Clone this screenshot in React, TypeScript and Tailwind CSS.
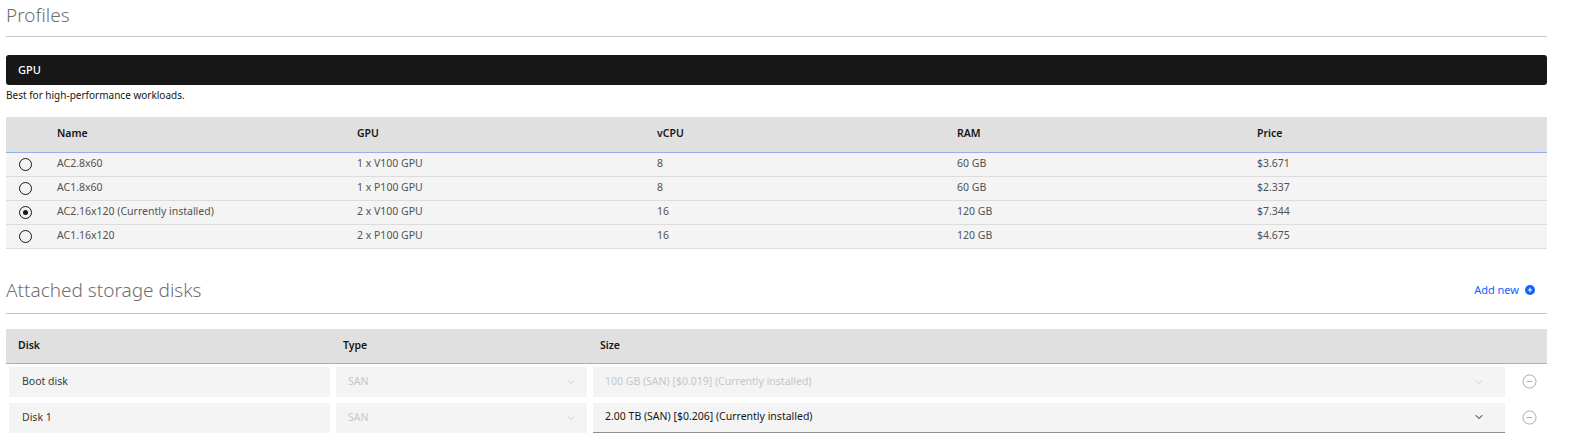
import { ChevronDown } from 'lucide-react';

interface Profile {
  name: string;
  gpu: string;
  vcpu: string;
  ram: string;
  price: string;
  selected?: boolean;
}

const profiles: Profile[] = [
  { name: 'AC2.8x60', gpu: '1 x V100 GPU', vcpu: '8', ram: '60 GB', price: '$3.671' },
  { name: 'AC1.8x60', gpu: '1 x P100 GPU', vcpu: '8', ram: '60 GB', price: '$2.337' },
  { name: 'AC2.16x120 (Currently installed)', gpu: '2 x V100 GPU', vcpu: '16', ram: '120 GB', price: '$7.344', selected: true },
  { name: 'AC1.16x120', gpu: '2 x P100 GPU', vcpu: '16', ram: '120 GB', price: '$4.675' },
];

function Radio({ checked }: { checked?: boolean }) {
  return (
    <span className="flex h-[13px] w-[13px] items-center justify-center rounded-full border-[1.5px] border-[#161616]">
      {checked && <span className="h-[5px] w-[5px] rounded-full bg-[#161616]" />}
    </span>
  );
}

function MinusCircle() {
  return (
    <svg width="15" height="15" viewBox="0 0 16 16" fill="none" stroke="#a8a8a8" strokeWidth="1">
      <circle cx="8" cy="8" r="7" />
      <line x1="5" y1="8" x2="11" y2="8" />
    </svg>
  );
}

export default function App() {
  return (
    <div className="w-[1580px] h-[445px] bg-white px-[6px] text-[#161616]" style={{ fontFamily: '"Noto Sans", "Open Sans", sans-serif' }}>
      <div className="w-[1541px]">
        {/* Profiles */}
        <h2 className="pt-[3px] h-[36px] text-[19px] font-light text-[#6f6f6f] leading-[24px]">Profiles</h2>
        <div className="border-t border-[#c6c6c6]" />

        <div className="mt-[18px] h-[30px] rounded-[3px] bg-[#171717] pl-[12px] flex items-center text-[11px] font-medium text-white">
          GPU
        </div>
        <p className="mt-[3px] text-[10px] text-[#161616] leading-[14px]">Best for high-performance workloads.</p>

        <table className="mt-[15px] w-full border-collapse text-[10.5px] table-fixed">
          <thead>
            <tr className="h-[35px] bg-[#e0e0e0] border-b border-[#8fb3e8] text-left">
              <th className="w-[35px]" />
              <th className="w-[300px] pl-[16px] font-semibold">Name</th>
              <th className="w-[300px] pl-[16px] font-semibold">GPU</th>
              <th className="w-[300px] pl-[16px] font-semibold">vCPU</th>
              <th className="w-[300px] pl-[16px] font-semibold">RAM</th>
              <th className="pl-[16px] font-semibold">Price</th>
            </tr>
          </thead>
          <tbody>
            {profiles.map((p) => (
              <tr key={p.name} className="h-[24px] bg-[#f4f4f4] border-b border-[#dcdcdc] text-[#525252]">
                <td className="pl-[13px]">
                  <Radio checked={p.selected} />
                </td>
                <td className="pl-[16px]">{p.name}</td>
                <td className="pl-[16px]">{p.gpu}</td>
                <td className="pl-[16px]">{p.vcpu}</td>
                <td className="pl-[16px]">{p.ram}</td>
                <td className="pl-[16px]">{p.price}</td>
              </tr>
            ))}
          </tbody>
        </table>

        {/* Attached storage disks */}
        <div className="mt-[28px] h-[36px] flex items-start justify-between">
          <h2 className="pt-[1px] text-[19px] font-light text-[#6f6f6f] leading-[24px]">Attached storage disks</h2>
          <button className="mt-[5px] mr-[12px] flex items-center gap-[6px] text-[11px] text-[#0f62fe]">
            Add new
            <svg width="10" height="10" viewBox="0 0 16 16">
              <circle cx="8" cy="8" r="8" fill="#0f62fe" />
              <path d="M8 4.5v7M4.5 8h7" stroke="white" strokeWidth="1.8" />
            </svg>
          </button>
        </div>
        <div className="border-t border-[#c6c6c6]" />

        <div className="mt-[15px] h-[35px] bg-[#e0e0e0] border-b border-[#8fb3e8] flex items-center text-[10.5px] font-semibold">
          <div className="w-[327px] pl-[12px]">Disk</div>
          <div className="w-[257px] pl-[10px]">Type</div>
          <div className="pl-[10px]">Size</div>
        </div>

        <div className="pt-[3px] flex flex-col gap-[6px] text-[10.5px]">
          {/* Boot disk */}
          <div className="flex items-center gap-[6px] pl-[3px]">
            <div className="w-[321px] h-[30px] bg-[#f4f4f4] flex items-center pl-[13px] text-[#393939]">Boot disk</div>
            <div className="w-[251px] h-[30px] bg-[#f4f4f4] flex items-center justify-between pl-[12px] pr-[10px] text-[#c6c6c6]">
              SAN
              <ChevronDown size={12} strokeWidth={1.5} className="text-[#c6c6c6]" />
            </div>
            <div className="w-[912px] h-[30px] bg-[#f4f4f4] flex items-center justify-between pl-[12px] pr-[20px] text-[#c6c6c6]">
              100 GB (SAN) [$0.019] (Currently installed)
              <ChevronDown size={12} strokeWidth={1.5} className="text-[#c6c6c6]" />
            </div>
            <div className="flex-1 flex justify-center">
              <MinusCircle />
            </div>
          </div>

          {/* Disk 1 */}
          <div className="flex items-center gap-[6px] pl-[3px]">
            <div className="w-[321px] h-[30px] bg-[#f4f4f4] flex items-center pl-[13px] text-[#393939]">Disk 1</div>
            <div className="w-[251px] h-[30px] bg-[#f4f4f4] flex items-center justify-between pl-[12px] pr-[10px] text-[#c6c6c6]">
              SAN
              <ChevronDown size={12} strokeWidth={1.5} className="text-[#c6c6c6]" />
            </div>
            <div className="w-[912px] h-[30px] bg-[#f4f4f4] border-b border-[#8d8d8d] flex items-center justify-between pl-[12px] pr-[20px] text-[#161616]">
              2.00 TB (SAN) [$0.206] (Currently installed)
              <ChevronDown size={12} strokeWidth={2} className="text-[#161616]" />
            </div>
            <div className="flex-1 flex justify-center">
              <MinusCircle />
            </div>
          </div>
        </div>
      </div>
    </div>
  );
}
